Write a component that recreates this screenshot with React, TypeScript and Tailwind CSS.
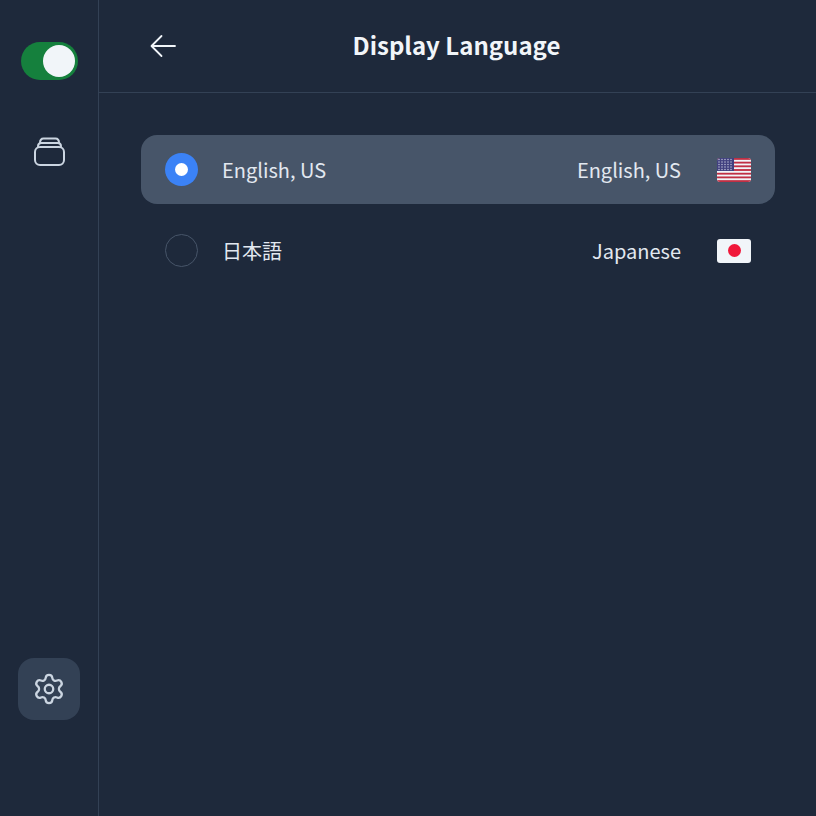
import { Settings } from "lucide-react";

const font = { fontFamily: '"Noto Sans CJK JP", "Noto Sans", sans-serif' };

function UsFlag() {
  const stripes = [0, 2, 4, 6, 8, 10, 12];
  return (
    <svg width="34" height="24" viewBox="0 0 34 24" className="block">
      <defs>
        <clipPath id="flagclip">
          <rect x="0" y="0" width="34" height="24" rx="3" />
        </clipPath>
      </defs>
      <g clipPath="url(#flagclip)">
        <rect width="34" height="24" fill="#f1f5f9" />
        {stripes.map((s) => (
          <rect key={s} y={(s * 24) / 13} width="34" height={24 / 13} fill="#c02f44" />
        ))}
        <rect width="17" height="13" fill="#41407f" />
        {[1.5, 4, 6.5, 9, 11.5].map((y) =>
          [2, 5, 8, 11, 14].map((x) => (
            <circle key={`${x}-${y}`} cx={x} cy={y} r="0.7" fill="#c9cce0" />
          ))
        )}
      </g>
    </svg>
  );
}

function JpFlag() {
  return (
    <div className="w-[34px] h-6 rounded-[3px] bg-[#f1f5f9] flex items-center justify-center">
      <div className="w-[13px] h-[13px] rounded-full bg-[#f0183a]" />
    </div>
  );
}

function Stack() {
  return (
    <svg width="32" height="32" viewBox="0 0 32 32" fill="none" stroke="#cbd5e1" strokeWidth="2" strokeLinecap="round" strokeLinejoin="round">
      <rect x="2" y="13" width="29" height="18" rx="5" transform="translate(0 -1)" />
      <path d="M5 11.5 C5 9 6 8 8 8 H25 C27 8 28 9 28 11.5" />
      <path d="M7 8 C7 5 8 3.5 10.5 3.5 H22.5 C25 3.5 26 5 26 8" />
    </svg>
  );
}

function Row({ active, name, label, flag }: { active?: boolean; name: string; label: string; flag: React.ReactNode }) {
  return (
    <div className={`h-[69px] rounded-2xl flex items-center pl-6 pr-6 ${active ? "bg-[#475569]" : ""}`}>
      {active ? (
        <div className="w-[33px] h-[33px] rounded-full bg-[#3b82f6] flex items-center justify-center">
          <div className="w-[13px] h-[13px] rounded-full bg-white" />
        </div>
      ) : (
        <div className="w-[33px] h-[33px] rounded-full border border-[#475569]" />
      )}
      <div className="ml-6 text-[20px] leading-7 text-[#e2e8f0] flex-1">{name}</div>
      <div className="text-[20px] leading-7 text-[#e2e8f0] mr-9">{label}</div>
      {flag}
    </div>
  );
}

export default function App() {
  return (
    <div className="w-[816px] h-[816px] bg-[#1e293b] flex overflow-hidden" style={font}>
      <aside className="w-[99px] h-full border-r border-[#334155] flex flex-col items-center pt-[42px] pb-24 shrink-0">
        <div className="w-[57px] h-[38px] rounded-full bg-[#15803d] flex items-center justify-end pr-[3px]">
          <div className="w-8 h-8 rounded-full bg-[#f1f5f9]" />
        </div>
        <div className="mt-[55px] h-8 flex items-center justify-center">
          <Stack />
        </div>
        <div className="mt-auto w-[62px] h-[62px] rounded-2xl bg-[#334155] flex items-center justify-center">
          <Settings size={34} strokeWidth={1.6} color="#cbd5e1" />
        </div>
      </aside>
      <main className="flex-1 flex flex-col min-w-0">
        <header className="relative h-[93px] border-b border-[#334155] flex items-center justify-center shrink-0">
          <svg className="absolute left-[50px] top-[32px]" width="28" height="28" viewBox="0 0 28 28" fill="none" stroke="#f1f5f9" strokeWidth="1.8" strokeLinecap="round" strokeLinejoin="round">
            <path d="M26 14 H3" />
            <path d="M12.5 4 L2.5 14 L12.5 24" />
          </svg>
          <h1 className="text-[24px] leading-8 font-bold text-[#f1f5f9] pb-[2px] pr-[2px]">Display Language</h1>
        </header>
        <div className="pt-[42px] pl-[42px] pr-[41px] flex flex-col gap-3">
          <Row active name="English, US" label="English, US" flag={<UsFlag />} />
          <Row name="日本語" label="Japanese" flag={<JpFlag />} />
        </div>
      </main>
    </div>
  );
}
